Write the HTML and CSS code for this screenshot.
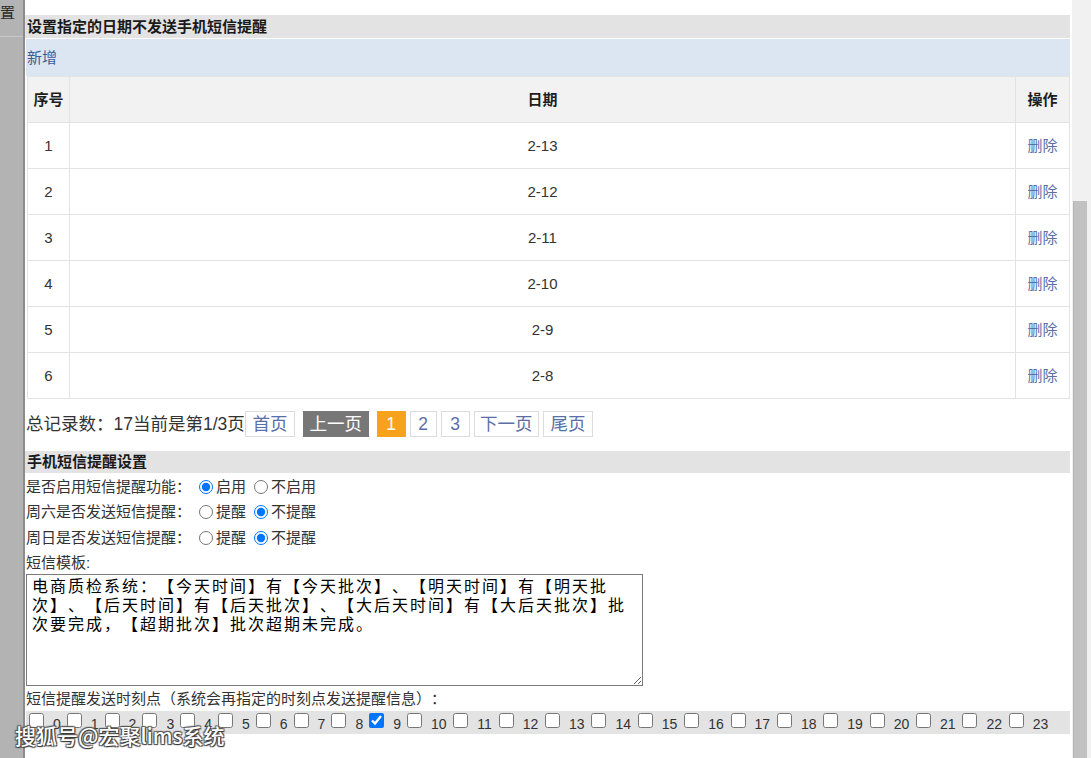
FILE: index.html
```html
<!DOCTYPE html>
<html lang="zh-CN">
<head>
<meta charset="utf-8">
<title>短信提醒设置</title>
<link rel="stylesheet" href="styles.css">
</head>
<body>
<div class="app">
  <aside class="sidebar">
    <div class="side-top">置</div>
  </aside>
  <main class="content">
    <div class="bar">设置指定的日期不发送手机短信提醒</div>
    <div class="toolbar"><a class="link">新增</a></div>
    <table class="grid">
      <thead>
        <tr><th class="c-no">序号</th><th>日期</th><th class="c-op">操作</th></tr>
      </thead>
      <tbody>
        <tr><td>1</td><td>2-13</td><td><a class="del">删除</a></td></tr>
        <tr><td>2</td><td>2-12</td><td><a class="del">删除</a></td></tr>
        <tr><td>3</td><td>2-11</td><td><a class="del">删除</a></td></tr>
        <tr><td>4</td><td>2-10</td><td><a class="del">删除</a></td></tr>
        <tr><td>5</td><td>2-9</td><td><a class="del">删除</a></td></tr>
        <tr><td>6</td><td>2-8</td><td><a class="del">删除</a></td></tr>
      </tbody>
    </table>
    <div class="pager">
      <span class="total">总记录数：17当前是第1/3页</span>
      <a class="pg pg-two">首页</a>
      <a class="pg pg-dark">上一页</a>
      <a class="pg pg-num pg-cur">1</a>
      <a class="pg pg-num pg-tight">2</a>
      <a class="pg pg-num pg-tight pg-wide">3</a>
      <a class="pg pg-tight">下一页</a>
      <a class="pg pg-tight pg-two">尾页</a>
    </div>
    <div class="bar bar-2">手机短信提醒设置</div>
    <div class="options">
      <div class="opt-row">
        <span class="opt-label">是否启用短信提醒功能：</span>
        <label class="opt"><input type="radio" name="en" checked>启用</label>
        <label class="opt"><input type="radio" name="en">不启用</label>
      </div>
      <div class="opt-row">
        <span class="opt-label">周六是否发送短信提醒：</span>
        <label class="opt"><input type="radio" name="sat">提醒</label>
        <label class="opt"><input type="radio" name="sat" checked>不提醒</label>
      </div>
      <div class="opt-row">
        <span class="opt-label">周日是否发送短信提醒：</span>
        <label class="opt"><input type="radio" name="sun">提醒</label>
        <label class="opt"><input type="radio" name="sun" checked>不提醒</label>
      </div>
    </div>
    <div class="text-row">短信模板:</div>
    <div class="tpl-row">
      <textarea class="tpl">电商质检系统：【今天时间】有【今天批次】、【明天时间】有【明天批次】、【后天时间】有【后天批次】、【大后天时间】有【大后天批次】批次要完成，【超期批次】批次超期未完成。</textarea>
    </div>
    <div class="text-row text-row-2">短信提醒发送时刻点（系统会再指定的时刻点发送提醒信息）：</div>
    <div class="hours">
      <label class="hour"><input type="checkbox"><span>0</span></label>
      <label class="hour"><input type="checkbox"><span>1</span></label>
      <label class="hour"><input type="checkbox"><span>2</span></label>
      <label class="hour"><input type="checkbox"><span>3</span></label>
      <label class="hour"><input type="checkbox"><span>4</span></label>
      <label class="hour"><input type="checkbox"><span>5</span></label>
      <label class="hour"><input type="checkbox"><span>6</span></label>
      <label class="hour"><input type="checkbox"><span>7</span></label>
      <label class="hour"><input type="checkbox"><span>8</span></label>
      <label class="hour"><input type="checkbox" checked><span>9</span></label>
      <label class="hour"><input type="checkbox"><span>10</span></label>
      <label class="hour"><input type="checkbox"><span>11</span></label>
      <label class="hour"><input type="checkbox"><span>12</span></label>
      <label class="hour"><input type="checkbox"><span>13</span></label>
      <label class="hour"><input type="checkbox"><span>14</span></label>
      <label class="hour"><input type="checkbox"><span>15</span></label>
      <label class="hour"><input type="checkbox"><span>16</span></label>
      <label class="hour"><input type="checkbox"><span>17</span></label>
      <label class="hour"><input type="checkbox"><span>18</span></label>
      <label class="hour"><input type="checkbox"><span>19</span></label>
      <label class="hour"><input type="checkbox"><span>20</span></label>
      <label class="hour"><input type="checkbox"><span>21</span></label>
      <label class="hour"><input type="checkbox"><span>22</span></label>
      <label class="hour"><input type="checkbox"><span>23</span></label>
    </div>
  </main>
  <div class="gutter">
    <div class="thumb"></div>
  </div>
</div>
<div class="watermark">搜狐号@宏聚lims系统</div>
</body>
</html>
```

FILE: styles.css
```css
html, body {
  margin: 0;
  padding: 0;
  background: #ffffff;
}

body {
  font-family: "Liberation Sans", "Noto Sans CJK SC", sans-serif;
  color: #333333;
  font-size: 15px;
  width: 1091px;
  height: 758px;
  overflow: hidden;
  position: relative;
  text-spacing-trim: space-all;
}

.app {
  display: flex;
  height: 758px;
}

.sidebar {
  width: 23px;
  flex: none;
  background: #b3b3b3;
  border-right: 2px solid #8c8c8c;
}

.side-top {
  height: 37px;
  border-bottom: 1px solid #c8c8c8;
  font-size: 15px;
  line-height: 20px;
  padding-top: 3px;
  box-sizing: border-box;
  color: #2a2a2a;
  overflow: hidden;
  white-space: nowrap;
}

.content {
  width: 1045px;
  flex: none;
  padding-top: 15px;
  box-sizing: border-box;
}

.gutter {
  width: 19px;
  flex: none;
  margin-left: 2px;
  background: #f1f1f1;
  display: flex;
  flex-direction: column;
  align-items: center;
}

.thumb {
  width: 13px;
  margin-top: 201px;
  flex: 1;
  background: #c1c1c1;
  border-left: 1px solid #b4b4b4;
  margin-right: 4px;
}

.bar {
  height: 23px;
  line-height: 23px;
  background: #e3e3e3;
  font-weight: bold;
  font-size: 15px;
  color: #1a1a1a;
  padding-left: 2px;
  white-space: nowrap;
}

.bar-2 {
  height: 22px;
  line-height: 22px;
}

.toolbar {
  height: 37px;
  line-height: 37px;
  margin-top: 1px;
  margin-left: 1px;
  background: #dbe6f2;
  padding-left: 1px;
  font-size: 15px;
}

.link {
  color: #3c5c98;
  cursor: pointer;
}

.grid {
  margin-left: 2px;
  width: 1043px;
  border-collapse: collapse;
  font-size: 15px;
  table-layout: fixed;
}

.grid th,
.grid td {
  border: 1px solid #e3e3e3;
  height: 45px;
  padding: 0;
  text-align: center;
  vertical-align: middle;
  line-height: 20px;
}

.grid th {
  background: #f2f2f2;
  font-weight: bold;
  color: #1e1e1e;
}

.grid td {
  color: #333333;
}

.c-no {
  width: 41px;
}

.c-op {
  width: 53px;
}

.del {
  color: #5a6ea8;
  cursor: pointer;
}

.pager {
  display: flex;
  align-items: center;
  height: 26px;
  margin-top: 12px;
  margin-bottom: 14px;
  padding-left: 1px;
  font-size: 17.5px;
  line-height: 24px;
  white-space: nowrap;
}

.total {
  color: #333333;
  width: 219px;
  flex: none;
  overflow: hidden;
}

.pg {
  display: inline-flex;
  align-items: center;
  justify-content: center;
  height: 26px;
  box-sizing: border-box;
  padding: 0 5.5px;
  border: 1px solid #dcdcdc;
  color: #5a6ea8;
  margin-left: 8px;
  cursor: pointer;
}

.pg-two {
  padding: 0 6.5px;
}

.total + .pg {
  margin-left: 0;
}

.pg-tight {
  margin-left: 4px;
}

.pg-num {
  min-width: 27px;
  padding: 0 4px;
}

.pg-wide {
  min-width: 29px;
}

.pg-dark {
  background: #777777;
  border-color: #777777;
  color: #ffffff;
}

.pg-cur {
  background: #f7a21c;
  border-color: #f7a21c;
  color: #ffffff;
  min-width: 29px;
}

.options {
  padding-top: 1px;
}

.opt-row {
  display: flex;
  align-items: center;
  height: 25.5px;
  padding-left: 1px;
  font-size: 15px;
  line-height: 20px;
  color: #333333;
  white-space: nowrap;
}

.opt-label {
  width: 170px;
  flex: none;
  overflow: hidden;
}

.opt {
  display: inline-flex;
  align-items: center;
  margin-right: 5px;
}

.opt input {
  width: 14px;
  height: 14px;
  margin: 0 3px 0 3px;
}

.text-row {
  height: 23px;
  line-height: 23px;
  padding-left: 1px;
  font-size: 15px;
  color: #333333;
  white-space: nowrap;
}

.tpl-row {
  padding-left: 1px;
  height: 113px;
}

.tpl {
  display: block;
  width: 617px;
  height: 112px;
  box-sizing: border-box;
  margin: 0;
  padding: 1px 10px 2px 5px;
  border: 1px solid #7a7a7a;
  font-family: "Noto Sans Mono CJK SC", "Noto Sans CJK SC", monospace;
  font-size: 16px;
  letter-spacing: 2px;
  line-height: 19px;
  color: #000000;
  background: #ffffff;
  text-spacing-trim: space-all;
}

.text-row-2 {
  height: 24px;
  line-height: 24px;
}

.hours {
  display: flex;
  align-items: center;
  height: 23px;
  margin-left: 1px;
  padding-left: 3px;
  background: #e3e3e3;
  font-size: 14px;
  color: #333333;
  white-space: nowrap;
}

.hour {
  display: inline-flex;
  align-items: center;
  margin-right: 6px;
}

.hour:nth-child(n+11) {
  margin-right: 6.8px;
}

.hour input {
  width: 15px;
  height: 15px;
  margin: 0 9px 0 0;
  position: relative;
  top: -2px;
}

.hour span {
  line-height: 16px;
  padding-top: 4px;
}

.watermark {
  position: absolute;
  left: 15px;
  top: 721px;
  font-family: "Noto Sans CJK SC", sans-serif;
  font-size: 21px;
  font-weight: 500;
  line-height: 28px;
  color: #ffffff;
  text-shadow: 1px 1px 1px #333, -1px -1px 1px #555, 1px -1px 1px #555, -1px 1px 1px #555;
  white-space: nowrap;
}
```
